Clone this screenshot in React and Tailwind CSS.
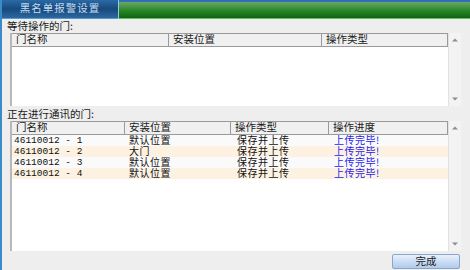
import React from "react";

const cjk = "font-['Noto_Sans_CJK_SC','Noto_Sans',sans-serif]";

function Scrollbar() {
  return (
    <div className="w-[13px] bg-[#f3f3f3] border-l border-[#e2e2e2] flex flex-col justify-between items-center py-[5px]">
      <svg width="6" height="4" viewBox="0 0 6 4"><path d="M0 3.5 L3 0.5 L6 3.5 Z" fill="#8c8c8c" /></svg>
      <svg width="6" height="4" viewBox="0 0 6 4"><path d="M0 0.5 L3 3.5 L6 0.5 Z" fill="#8c8c8c" /></svg>
    </div>
  );
}

function Header({ cols }) {
  return (
    <div className="flex h-[14px] bg-[#f0f0f0] border-t border-b border-[#9a9a9a] shrink-0">
      {cols.map((c, i) => (
        <div
          key={i}
          style={{ width: c.w }}
          className={`${i === cols.length - 1 ? "flex-1" : "shrink-0"} border-r border-[#9a9a9a] pl-[4px] flex items-center`}
        >
          <span className="text-[10.5px] leading-[10px] text-[#1a1a1a] whitespace-nowrap pb-[2px]">{c.t}</span>
        </div>
      ))}
    </div>
  );
}

const rows = [
  ["46110012 - 1", "默认位置"],
  ["46110012 - 2", "大门"],
  ["46110012 - 3", "默认位置"],
  ["46110012 - 4", "默认位置"],
];

function Cell({ className, children }) {
  return (
    <div className={`h-full flex items-center ${className}`}>
      <span className="text-[10px] leading-[9px] whitespace-nowrap pb-[2px] tracking-[0.5px]">{children}</span>
    </div>
  );
}

export default function App() {
  return (
    <div className={`w-[470px] h-[270px] bg-[#eeeeee] flex flex-col overflow-hidden border-l-2 border-[#3b8bc9] ${cjk}`}>
      {/* top bar */}
      <div className="h-[19px] flex shrink-0">
        <div className="w-[116px] bg-gradient-to-b from-[#2a6aa6] via-[#184a7c] to-[#2c68a0] flex items-center justify-center border-b border-[#5a9ad0]">
          <span className="text-[10.5px] leading-[10px] pb-[2px] text-[#c4dcf2] tracking-[1px]">黑名单报警设置</span>
        </div>
        <div className="w-[1px] bg-[#9cc4e4]"></div>
        <div className="flex-1 flex flex-col">
          <div className="h-[2px] bg-[#2f6fb4]"></div>
          <div className="flex-1 bg-gradient-to-b from-[#6aa56a] via-[#2a8a2a] to-[#0d650d]"></div>
          <div className="h-[1px] bg-[#62c062]"></div>
        </div>
      </div>

      {/* label 1 */}
      <div className="h-[14px] pl-[5px] flex items-center shrink-0">
        <span className="text-[10.5px] leading-[10px] pb-[1px] text-[#1a1a1a]">等待操作的门:</span>
      </div>

      {/* table 1 */}
      <div className="ml-[8px] mr-[9px] h-[73px] flex shrink-0">
        <div className="flex-1 flex flex-col bg-white border-l-2 border-[#b8b8b8]">
          <Header cols={[{ t: "门名称", w: 157 }, { t: "安装位置", w: 153 }, { t: "操作类型", w: 126 }]} />
          <div className="flex-1"></div>
        </div>
        <Scrollbar />
      </div>

      {/* label 2 */}
      <div className="h-[15px] pl-[5px] flex items-center shrink-0">
        <span className="text-[10.5px] leading-[10px] pt-[1px] text-[#1a1a1a]">正在进行通讯的门:</span>
      </div>

      {/* table 2 */}
      <div className="ml-[8px] mr-[9px] h-[130px] flex shrink-0">
        <div className="flex-1 flex flex-col bg-white border-l-2 border-[#b8b8b8]">
          <Header cols={[{ t: "门名称", w: 113 }, { t: "安装位置", w: 106 }, { t: "操作类型", w: 98 }, { t: "操作进度", w: 119 }]} />
          {rows.map((r, i) => (
            <div key={i} className={`flex h-[11px] shrink-0 ${i % 2 ? "bg-[#fdf1e2]" : "bg-[#fafafa]"}`}>
              <div className="w-[113px] shrink-0 pl-[2px] h-full flex items-center font-['Liberation_Mono',monospace] text-[9.5px] leading-[9px] text-[#111] whitespace-nowrap">{r[0]}</div>
              <Cell className="w-[106px] shrink-0 pl-[4px] text-[#111]">{r[1]}</Cell>
              <Cell className="w-[98px] shrink-0 pl-[6px] text-[#111]">保存并上传</Cell>
              <Cell className="flex-1 pl-[5px] text-[#1c1cf0]">上传完毕!</Cell>
            </div>
          ))}
          <div className="flex-1"></div>
        </div>
        <Scrollbar />
      </div>

      {/* button */}
      <div className="flex justify-end mr-[10px] mt-[3px]">
        <div className="w-[68px] h-[15px] rounded-[2px] border border-[#8aa6cc] bg-gradient-to-b from-[#e8f0fb] to-[#afcaec] flex items-center justify-center">
          <span className="text-[10.5px] leading-[10px] pb-[1px] text-[#1a1a1a]">完成</span>
        </div>
      </div>
    </div>
  );
}
